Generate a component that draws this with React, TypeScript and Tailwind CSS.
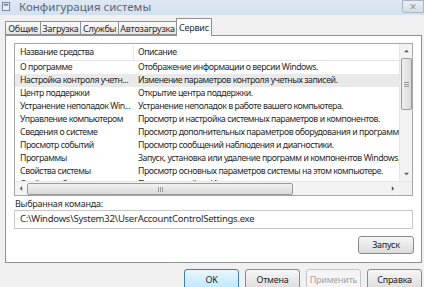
import React from "react";

const rows: [string, string][] = [
  ["О программе", "Отображение информации о версии Windows."],
  ["Настройка контроля учетн...", "Изменение параметров контроля учетных записей."],
  ["Центр поддержки", "Открытие центра поддержки."],
  ["Устранение неполадок Win...", "Устранение неполадок в работе вашего компьютера."],
  ["Управление компьютером", "Просмотр и настройка системных параметров и компонентов."],
  ["Сведения о системе", "Просмотр дополнительных параметров оборудования и программного обеспечения."],
  ["Просмотр событий", "Просмотр сообщений наблюдения и диагностики."],
  ["Программы", "Запуск, установка или удаление программ и компонентов Windows."],
  ["Свойства системы", "Просмотр основных параметров системы на этом компьютере."],
  ["Свойства обозревателя", "Просмотр свойств Интернета."],
];

const tabs = ["Общие", "Загрузка", "Службы", "Автозагрузка"];

function Arrow({ dir }: { dir: "up" | "down" | "left" | "right" }) {
  const pts = {
    up: "1,4 4,1 7,4",
    down: "1,1 4,4 7,1",
    left: "4,1 1,4 4,7",
    right: "1,1 4,4 1,7",
  }[dir];
  const vb = dir === "up" || dir === "down" ? "0 0 8 5" : "0 0 5 8";
  return (
    <svg viewBox={vb} className={dir === "up" || dir === "down" ? "w-[7px] h-[4px]" : "w-[4px] h-[7px]"}>
      <polygon points={pts} fill="#5a5a5a" />
    </svg>
  );
}

function Btn({ label, primary, disabled, small }: { label: string; primary?: boolean; disabled?: boolean; small?: boolean }) {
  const cls = primary
    ? "border-[#3c7fb1] bg-gradient-to-b from-[#eaf6fd] to-[#bee6fd] text-[#1e1e1e]"
    : disabled
      ? "border-[#c3c5c7] bg-[#f4f4f4] text-[#a5a5a5]"
      : "border-[#8a8a8a] bg-gradient-to-b from-[#f6f6f6] to-[#dcdcdc] text-[#1e1e1e]";
  return (
    <div
      className={`${small ? "w-[56px] h-[18px]" : "w-[55px] h-[21px]"} rounded-[3px] border flex items-center justify-center shrink-0 ${cls}`}
    >
      {label}
    </div>
  );
}

export default function App() {
  return (
    <div
      className="w-[424px] h-[287px] overflow-hidden bg-[#f0f0f0] flex flex-col text-[9px] text-[#2a2a2a] tracking-[-0.25px]"
      style={{ fontFamily: '"Noto Sans", "DejaVu Sans", sans-serif' }}
    >
      {/* title bar */}
      <div className="h-[15px] shrink-0 flex items-start bg-gradient-to-b from-[#dde8f3] to-[#d3e0ee]">
        <div className="flex items-center h-[13px] pl-[2px] gap-[8px]">
          <svg viewBox="0 0 10 10" className="w-[9px] h-[9px]">
            <rect x="0.5" y="0.5" width="8" height="9" fill="#e9eef4" stroke="#6f7f90" />
            <rect x="2" y="2" width="5" height="2" fill="#5d86b5" />
          </svg>
          <span className="text-[11.5px] text-[#5b6876] leading-none tracking-normal">Конфигурация системы</span>
        </div>
        <div className="flex-1" />
        <div className="w-[22px] h-[13px] border border-[#a9b5c1] bg-gradient-to-b from-[#e9eef3] to-[#d4dde6] rounded-bl-[3px] flex items-center justify-center text-[#8a96a2] text-[9px] leading-none">
          ✕
        </div>
      </div>

      <div className="h-[3px] shrink-0" />

      {/* tabs */}
      <div className="h-[17px] shrink-0 flex items-end pl-[5px] relative z-10">
        {tabs.map((t) => (
          <div
            key={t}
            className="h-[14px] px-[2px] border border-r-0 border-[#8e9195] bg-gradient-to-b from-[#fbfbfb] to-[#e6e6e6] flex items-center justify-center text-[9px] leading-none first:w-[35px] [&:nth-child(2)]:w-[40px] [&:nth-child(3)]:w-[38px] [&:nth-child(4)]:w-[58px]"
          >
            {t}
          </div>
        ))}
        <div className="w-[36px] h-[18px] -mb-[1px] border border-b-0 border-[#8e9195] bg-white flex items-center justify-center text-[9px] leading-none pb-[1px]">
          Сервис
        </div>
      </div>

      {/* panel */}
      <div className="ml-[5px] w-[417px] h-[228px] shrink-0 border border-[#8e9195] bg-white flex flex-col pl-[8px] pt-[7px] pr-[7px]">
        <div className="w-[399px] h-[153px] shrink-0 border border-[#a4a7ab] flex flex-col overflow-hidden">
          <div className="flex-1 flex min-h-0">
            <div className="flex-1 flex flex-col min-w-0 overflow-hidden text-[8.75px] tracking-[-0.45px]">
              <div className="h-[17px] shrink-0 flex items-center border-b border-[#e5e5e5] pt-[1px]">
                <div className="w-[119px] pl-[5px] border-r border-[#eaeaea] h-full flex items-center">Название средства</div>
                <div className="pl-[4px]">Описание</div>
              </div>
              {rows.map(([a, b], i) => (
                <div
                  key={a}
                  className={`h-[13px] shrink-0 flex items-center whitespace-nowrap ${i === 1 ? "bg-[#e9e9e9]" : ""}`}
                >
                  <div className="w-[119px] pl-[5px] shrink-0 overflow-hidden">{a}</div>
                  <div className="pl-[4px]">{b}</div>
                </div>
              ))}
            </div>
            {/* vertical scrollbar */}
            <div className="w-[13px] shrink-0 bg-[#f3f3f3] border-l border-[#e6e6e6] flex flex-col items-center">
              <div className="h-[14px] flex items-center justify-center">
                <Arrow dir="up" />
              </div>
              <div className="w-[11px] h-[52px] rounded-[2px] border border-[#9a9a9a] bg-gradient-to-r from-[#f2f2f2] to-[#d9d9d9] flex flex-col items-center justify-center gap-[1px]">
                <div className="w-[5px] h-px bg-[#9a9a9a]" />
                <div className="w-[5px] h-px bg-[#9a9a9a]" />
                <div className="w-[5px] h-px bg-[#9a9a9a]" />
              </div>
              <div className="flex-1" />
              <div className="h-[14px] flex items-center justify-center">
                <Arrow dir="down" />
              </div>
            </div>
          </div>
          {/* horizontal scrollbar */}
          <div className="h-[14px] shrink-0 flex bg-[#f3f3f3] border-t border-[#e6e6e6]">
            <div className="w-[12px] flex items-center justify-center">
              <Arrow dir="left" />
            </div>
            <div className="w-[266px] h-[12px] mt-[1px] rounded-[2px] border border-[#9a9a9a] bg-gradient-to-b from-[#f2f2f2] to-[#d9d9d9] flex items-center justify-center gap-[1px]">
              <div className="w-px h-[5px] bg-[#9a9a9a]" />
              <div className="w-px h-[5px] bg-[#9a9a9a]" />
              <div className="w-px h-[5px] bg-[#9a9a9a]" />
            </div>
            <div className="flex-1" />
            <div className="w-[12px] flex items-center justify-center">
              <Arrow dir="right" />
            </div>
            <div className="w-[13px] bg-[#f0f0f0]" />
          </div>
        </div>

        <div className="mt-[1px] h-[13px] shrink-0 flex items-center pl-[1px]">Выбранная команда:</div>
        <div className="w-[399px] h-[19px] shrink-0 border border-[#c5c8cc] flex items-center pl-[5px] text-[9.5px]">
          C:\Windows\System32\UserAccountControlSettings.exe
        </div>
        <div className="flex justify-end mt-[7px]">
          <Btn label="Запуск" small />
        </div>
      </div>

      {/* bottom buttons */}
      <div className="flex justify-end gap-[6px] pr-[2px] pt-[6px]">
        <Btn label="OK" primary />
        <Btn label="Отмена" />
        <Btn label="Применить" disabled />
        <Btn label="Справка" />
      </div>
    </div>
  );
}
